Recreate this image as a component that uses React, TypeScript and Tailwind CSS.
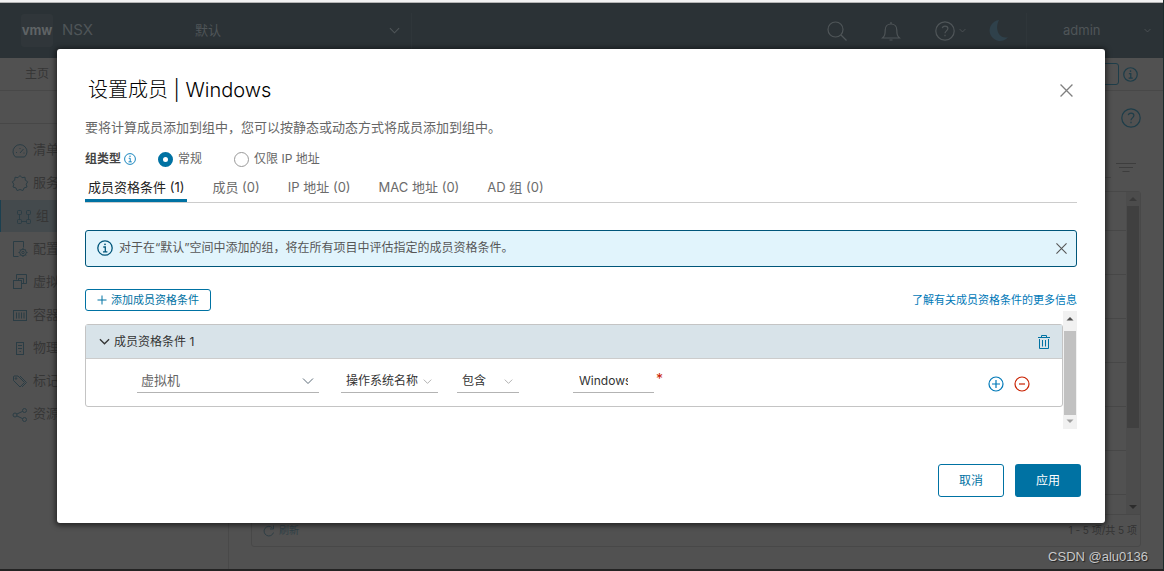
import { useState } from "react";
import type { ReactNode } from "react";

interface IconProps {
  children: ReactNode;
  className?: string;
  box?: number;
  stroke?: number;
}

function Icon({ children, className = "", box = 20, stroke = 1 }: IconProps) {
  return (
    <svg
      viewBox={`0 0 ${box} ${box}`}
      fill="none"
      stroke="currentColor"
      strokeWidth={stroke}
      className={`shrink-0 ${className}`}
      aria-hidden="true"
    >
      {children}
    </svg>
  );
}

function Chevron({ className = "", stroke = 1 }: { className?: string; stroke?: number }) {
  return (
    <Icon box={12} stroke={stroke} className={className}>
      <path d="M1 3.5 6 8.5 11 3.5" />
    </Icon>
  );
}

function Cross({ className = "" }: { className?: string }) {
  return (
    <Icon box={12} stroke={1.2} className={className}>
      <path d="M.5.5l11 11M11.5.5l-11 11" />
    </Icon>
  );
}

function InfoIcon({ className = "", stroke = 1.3 }: { className?: string; stroke?: number }) {
  return (
    <Icon box={16} stroke={stroke} className={className}>
      <circle cx="8" cy="8" r="7.2" />
      <path d="M6.3 7h2v4.8M6 11.8h4.4" />
      <circle cx="8" cy="4.3" r=".9" fill="currentColor" stroke="none" />
    </Icon>
  );
}

function HelpIcon({ className = "" }: { className?: string }) {
  return (
    <Icon className={className} stroke={1.2}>
      <circle cx="10" cy="10" r="9.2" />
      <path d="M7.2 7.2c.4-1.4 1.5-2 2.8-2 1.6 0 2.9.9 2.9 2.4 0 2.2-2.9 2.3-2.9 4.6" />
      <path d="M10 13.8v1.4" />
    </Icon>
  );
}

const navItems = [
  {
    label: "清单",
    icon: (
      <>
        <path d="M4.500 16A7 7 0 1 1 13.500 16z" />
        <path d="M9 12l3.500-4M5 11.500h1M9 7v1M12.500 12h1" />
      </>
    ),
  },
  {
    label: "服务",
    icon: (
      <path d="M9 1.500l2 2.200 3-.5.3 3 2.400 1.600-1.500 2.400.8 2.800-2.900.9-1.200 2.700L9 15.500l-2.900 1.100-1.200-2.700-2.900-.9.8-2.800L1.300 7.800l2.400-1.600.3-3 3 .5z" />
    ),
  },
  {
    label: "组",
    active: true,
    icon: (
      <>
        <rect x="2.500" y="3.500" width="4" height="4" rx="1" />
        <rect x="11.500" y="3.500" width="4" height="4" rx="1" />
        <rect x="2.500" y="12.500" width="4" height="4" rx="1" />
        <rect x="11.500" y="12.500" width="4" height="4" rx="1" />
        <path d="M4.500 7.500v5M13.500 7.500v5M6.500 14.500h5" />
      </>
    ),
  },
  {
    label: "配置",
    icon: (
      <>
        <path d="M7.500 16.500h-5v-15h10v6" />
        <circle cx="12" cy="12.500" r="3.300" />
        <circle cx="12" cy="12.500" r="1.200" />
        <path d="M12 8v1.200M12 15.800V17M7.500 12.500h1.200M15.300 12.500h1.200M9 9.500l.8.8M15 9.500l-.8.8M9 15.500l.8-.8M15 15.500l-.8-.8" />
      </>
    ),
  },
  {
    label: "虚拟",
    icon: (
      <>
        <path d="M5.500 6.500v-5h10v9h-4" />
        <rect x="2.500" y="7.500" width="8" height="8" />
        <path d="M7.500 7.500v-2h5v5h-2" />
      </>
    ),
  },
  {
    label: "容器",
    icon: (
      <>
        <rect x="2.500" y="4.500" width="13" height="10" />
        <path d="M5.500 6.500v6M8 6.500v6M10.500 6.500v6M13 6.500v6" />
      </>
    ),
  },
  {
    label: "物理",
    icon: (
      <>
        <rect x="5.500" y="3.500" width="7" height="12" />
        <path d="M7 6.500h4M7 9.500h4M8.500 12.500h1.500" />
      </>
    ),
  },
  {
    label: "标记",
    icon: (
      <>
        <path d="M2.500 4.500v4l6.500 6.500 4.500-4.500L7 4H3z" />
        <path d="M9 4l6.500 6.500-4.500 4.500" />
        <circle cx="5" cy="6.500" r=".8" />
      </>
    ),
  },
  {
    label: "资源",
    icon: (
      <>
        <circle cx="4" cy="10" r="2" />
        <circle cx="13.500" cy="5.500" r="2" />
        <circle cx="13.500" cy="14.500" r="2" />
        <path d="M5.800 9.100l5.900-2.800M5.800 10.900l5.900 2.800" />
      </>
    ),
  },
];

const tabs = ["成员资格条件 (1)", "成员 (0)", "IP 地址 (0)", "MAC 地址 (0)", "AD 组 (0)"];

function Header() {
  return (
    <header className="flex h-[55px] items-center bg-[#2b3236] text-[#4f5558]">
      <div className="flex w-[195px] items-center gap-[9px] pl-[21px]">
        <span className="flex h-[33px] w-8 items-center justify-center rounded-[3px] bg-[#30363a] text-[13px] font-bold text-[#5f6365]">
          vmw
        </span>
        <span className="text-[15px]">NSX</span>
      </div>
      <button className="flex h-9 w-[217px] items-center justify-between border-r border-[#2f363a] pr-[11px] text-[13px]">
        默认
        <Chevron className="size-[11px]" stroke={1.2} />
      </button>
      <div className="ml-auto flex items-center pr-4">
        <button aria-label="搜索">
          <Icon className="size-5" stroke={1.2}>
            <circle cx="8.500" cy="8.500" r="7.500" />
            <path d="M14 14l5.500 5.500" />
          </Icon>
        </button>
        <button aria-label="通知" className="ml-[34px]">
          <Icon className="size-5" stroke={1.2}>
            <path d="M1.500 17h17c-2-2-2.700-3-2.700-8 0-3.500-2.400-6-5.800-6S4.200 5.500 4.200 9c0 5-.7 6-2.700 8z" />
            <path d="M10 3V1M8.500 19h3" />
          </Icon>
        </button>
        <button aria-label="帮助" className="ml-[34px] flex items-center gap-1">
          <HelpIcon className="size-5" />
          <Chevron className="size-[7px]" stroke={1.5} />
        </button>
        <button aria-label="深色模式" className="ml-[21px] mr-0.5">
          <svg viewBox="0 0 20 20" className="size-[21px]" aria-hidden="true">
            <path d="M11.500 0A10 10 0 1 0 20 16.500C11 18.500 7 8 11.500 0z" fill="#2f414b" />
          </svg>
        </button>
      </div>
      <button className="flex h-9 w-[137px] items-center justify-between border-l border-[#2f363a] pr-3 pl-9 text-[13px]">
        admin
        <Chevron className="size-[7px]" stroke={1.5} />
      </button>
    </header>
  );
}

function SideNav() {
  return (
    <aside className="flex w-[229px] shrink-0 flex-col border-r border-[#494949]">
      <div className="h-[33px] border-b border-[#474747]" />
      <nav className="mt-[10px] flex flex-col gap-px text-[13px] text-[#363636]">
        {navItems.map((item) => (
          <a
            key={item.label}
            href="#"
            className={
              item.active
                ? "flex h-8 items-center gap-[3px] border-l border-[#1b4050] bg-[#444a4d] pl-[14px]"
                : "flex h-8 items-center gap-1 pl-[11px]"
            }
          >
            <Icon box={18} className="size-[18px] text-[#2b3d45]">
              {item.icon}
            </Icon>
            {item.label}
          </a>
        ))}
      </nav>
    </aside>
  );
}

function GroupList() {
  return (
    <main className="flex flex-1 flex-col pt-[17px] pr-[22px] pb-[22px] pl-[22px]">
      <button aria-label="帮助" className="self-end text-[#1e3d49]">
        <HelpIcon className="size-5" />
      </button>
      <div className="mt-7 flex h-[22px] items-center justify-end">
        <div className="h-full w-40 border-b border-[#444]" />
        <Icon className="mx-[5px] size-5 text-[#3d3d3d]">
          <path d="M0 6.500h20M3 10.500h14M6.500 14.500h7" />
        </Icon>
      </div>
      <div className="mt-[13px] flex flex-1 flex-col rounded-[3px] border border-[#484848]">
        <div className="flex flex-1">
          <div className="flex-1">
            <div className="h-[39px] border-b border-[#474747]" />
            {[1, 2, 3, 4, 5, 6].map((row) => (
              <div key={row} className="h-11 border-b border-[#474747]" />
            ))}
          </div>
          <div className="flex w-[14px] flex-col items-center justify-between bg-[#4c4c4c] py-1">
            <svg viewBox="0 0 8 6" className="h-1.5 w-2" aria-hidden="true">
              <path d="M0 5 4 1l4 4z" fill="#3a3a3a" />
            </svg>
            <div className="mt-1 mb-auto h-[222px] w-3 bg-[#404040]" />
            <svg viewBox="0 0 8 6" className="h-1.5 w-2" aria-hidden="true">
              <path d="M0 1l4 4 4-4z" fill="#2c2c2c" />
            </svg>
          </div>
        </div>
        <div className="flex h-8 items-center justify-between border-t border-[#484848] pr-[3px] pl-[11px]">
          <button className="flex items-center gap-1 text-[10px] text-[#2f3f46]">
            <Icon box={12} className="size-3">
              <path d="M10.500 7.500A4.800 4.800 0 1 1 9.500 3M10.500.5v3.500H7" />
            </Icon>
            刷新
          </button>
          <span className="text-[10px] text-[#333]">1 - 5 项/共 5 项</span>
        </div>
      </div>
    </main>
  );
}

function Criterion() {
  return (
    <section className="flex-1 self-start rounded-[3px] border border-[#c4c4c4]">
      <div className="flex h-[34px] items-center justify-between border-b border-[#ccc] bg-[#d8e3e9] pr-[11px] pl-[13px]">
        <button className="flex items-center gap-1 text-xs text-[#333]">
          <Chevron className="size-[11px]" stroke={1.4} />
          成员资格条件 1
        </button>
        <button aria-label="删除条件" className="text-[#0072a3]">
          <Icon box={14} className="size-[14px]">
            <path d="M1 2.500h12M4.500 2.500v-2h5v2M2.500 4v9.500h9V4M5.500 5v6.500M8.500 5v6.500" />
          </Icon>
        </button>
      </div>
      <div className="flex h-[47px] items-start pt-[10px] pr-8 pl-[51px] text-xs text-[#333]">
        <div className="grid items-center">
          <select
            aria-label="成员类型"
            className="col-start-1 row-start-1 h-6 w-[182px] appearance-none border-b border-[#b3b3b3] pl-1 text-[13px] text-[#666]"
          >
            <option>虚拟机</option>
          </select>
          <Chevron className="pointer-events-none col-start-1 row-start-1 mr-[5px] size-3 justify-self-end text-[#5c6b78]" />
        </div>
        <div className="ml-[22px] grid items-center">
          <select
            aria-label="属性"
            className="col-start-1 row-start-1 h-6 w-[97px] appearance-none border-b border-[#b3b3b3] pl-[5px]"
          >
            <option>操作系统名称</option>
          </select>
          <Chevron className="pointer-events-none col-start-1 row-start-1 mr-1.5 size-[9px] justify-self-end text-[#999]" />
        </div>
        <div className="ml-[19px] grid items-center">
          <select
            aria-label="运算符"
            className="col-start-1 row-start-1 h-6 w-[62px] appearance-none border-b border-[#b3b3b3] pl-[5px]"
          >
            <option>包含</option>
          </select>
          <Chevron className="pointer-events-none col-start-1 row-start-1 mr-1.5 size-[9px] justify-self-end text-[#999]" />
        </div>
        <input
          aria-label="值"
          defaultValue="Windows"
          className="ml-[54px] h-6 w-[81px] border-b border-[#b3b3b3] pr-[26px] pl-1.5 outline-none"
        />
        <span className="ml-[2px] text-sm text-[#c92100]">*</span>
        <div className="mt-[7px] ml-auto flex gap-[10px]">
          <button aria-label="添加" className="text-[#0079b8]">
            <Icon box={16} className="size-4" stroke={1.2}>
              <circle cx="8" cy="8" r="7" />
              <path d="M8 4v8M4 8h8" />
            </Icon>
          </button>
          <button aria-label="移除" className="text-[#c92100]">
            <Icon box={16} className="size-4" stroke={1.2}>
              <circle cx="8" cy="8" r="7" />
              <path d="M5 8h6" />
            </Icon>
          </button>
        </div>
      </div>
    </section>
  );
}

function MembersDialog() {
  const [groupType, setGroupType] = useState("general");
  const [activeTab, setActiveTab] = useState(tabs[0]);

  const radioClass =
    "size-[15px] appearance-none rounded-full border border-[#999] checked:border-[5px] checked:border-[#0072a3]";

  return (
    <div
      role="dialog"
      aria-labelledby="dialog-title"
      className="w-full rounded-[3px] bg-white px-7 pt-6 pb-[26px] shadow-[0_1px_5px_2px_rgba(0,0,0,0.5)]"
    >
      <div className="flex h-[34px] items-center justify-between px-[3px]">
        <h1 id="dialog-title" className="text-xl font-light text-black">
          设置成员 | Windows
        </h1>
        <button aria-label="关闭" className="pt-px pr-px text-[#808080]">
          <Cross className="size-[13px]" />
        </button>
      </div>

      <p className="mt-[10px] text-[13px] leading-5 text-[#666]">
        要将计算成员添加到组中，您可以按静态或动态方式将成员添加到组中。
      </p>

      <div className="mt-3 flex h-5 items-center text-xs text-[#666]">
        <span className="font-bold text-[#444]">组类型</span>
        <InfoIcon className="ml-[3px] size-3 text-[#0079b8]" stroke={1.2} />
        <label className="ml-[22px] flex items-center gap-[5px]">
          <input
            type="radio"
            name="groupType"
            checked={groupType === "general"}
            onChange={() => setGroupType("general")}
            className={radioClass}
          />
          常规
        </label>
        <label className="ml-8 flex items-center gap-[5px]">
          <input
            type="radio"
            name="groupType"
            checked={groupType === "ip"}
            onChange={() => setGroupType("ip")}
            className={radioClass}
          />
          仅限 IP 地址
        </label>
      </div>

      <div role="tablist" className="mt-1 flex h-[30px] gap-[22px] border-b border-[#ccc] text-[13px]">
        {tabs.map((tab) => (
          <button
            key={tab}
            role="tab"
            aria-selected={tab === activeTab}
            onClick={() => setActiveTab(tab)}
            className={
              tab === activeTab
                ? "border-b-[3px] border-[#0072a3] px-[3px] pt-[3px] text-[#222]"
                : "border-b-[3px] border-transparent px-[3px] pt-[3px] text-[#6b6b6b]"
            }
          >
            {tab}
          </button>
        ))}
      </div>

      <div className="mt-[27px] flex min-h-[37px] items-center rounded-[3px] border border-[#00567a] bg-[#e1f4fc] pr-[9px] pb-px pl-[11px] text-xs text-[#565656]">
        <InfoIcon className="size-4 text-[#00567a]" />
        <span className="ml-1.5">
          对于在“默认”空间中添加的组，将在所有项目中评估指定的成员资格条件。
        </span>
        <button aria-label="关闭提示" className="ml-auto text-[#565656]">
          <Cross className="size-[11px]" />
        </button>
      </div>

      <div className="mt-[22px] flex h-[22px] items-center justify-between text-[11px]">
        <button className="flex h-full items-center gap-1 rounded-[3px] border border-[#0072a3] px-[11px] text-[#0072a3]">
          <Icon box={10} className="size-[10px]">
            <path d="M5 .500v9M.500 5h9" />
          </Icon>
          添加成员资格条件
        </button>
        <a href="#" className="text-[#0079b8]">
          了解有关成员资格条件的更多信息
        </a>
      </div>

      <div className="flex h-[118px]">
        <div className="flex flex-1 pt-[13px]">
          <Criterion />
        </div>
        <div className="flex w-[14px] flex-col items-center bg-[#f1f1f1] py-[5px]">
          <svg viewBox="0 0 8 5" className="h-[5px] w-2" aria-hidden="true">
            <path d="M.5 4.500 4 1l3.500 3.500z" fill="#505050" />
          </svg>
          <div className="mt-[10px] mb-1 w-3 flex-1 bg-[#c1c1c1]" />
          <svg viewBox="0 0 8 5" className="h-[5px] w-2" aria-hidden="true">
            <path d="M.5.5 4 4 7.500.5z" fill="#a0a0a0" />
          </svg>
        </div>
      </div>

      <div className="-mr-1 mt-[35px] flex justify-end gap-[11px] text-xs">
        <button className="h-[33px] w-[66px] rounded-[3px] border border-[#0072a3] text-[#0072a3]">
          取消
        </button>
        <button className="h-[33px] w-[66px] rounded-[3px] bg-[#0072a3] text-white">
          应用
        </button>
      </div>
    </div>
  );
}

export default function App() {
  return (
    <div className="relative flex min-h-screen flex-col border-r border-b-2 border-r-[#1c2b2b] border-b-[#232323] bg-[#515151] font-['Inter','Noto_Sans_CJK_SC',sans-serif]">
      <div className="h-[3px] border-b border-[#b5b5b5] bg-[#f2f2f2]" />
      <Header />
      <div className="flex h-[33px] items-center justify-between border-b border-[#484848] pr-[25px] pl-[25px] text-xs text-[#363636]">
        <a href="#">主页</a>
        <div className="flex items-center gap-1">
          <input
            aria-label="搜索对象"
            className="h-[22px] w-60 rounded-[3px] border border-[#1e3d49]"
          />
          <InfoIcon className="size-[15px] text-[#1e3d49]" />
        </div>
      </div>
      <div className="flex flex-1">
        <SideNav />
        <GroupList />
      </div>

      <div className="absolute inset-0 flex items-start pt-[49px] pr-[58px] pl-[57px]">
        <MembersDialog />
      </div>

      <span className="absolute right-[15px] bottom-[3px] font-['Liberation_Sans',sans-serif] text-[13px] text-[#c9c9c9] [text-shadow:1px_1px_1px_#222]">
        CSDN @alu0136
      </span>
    </div>
  );
}
